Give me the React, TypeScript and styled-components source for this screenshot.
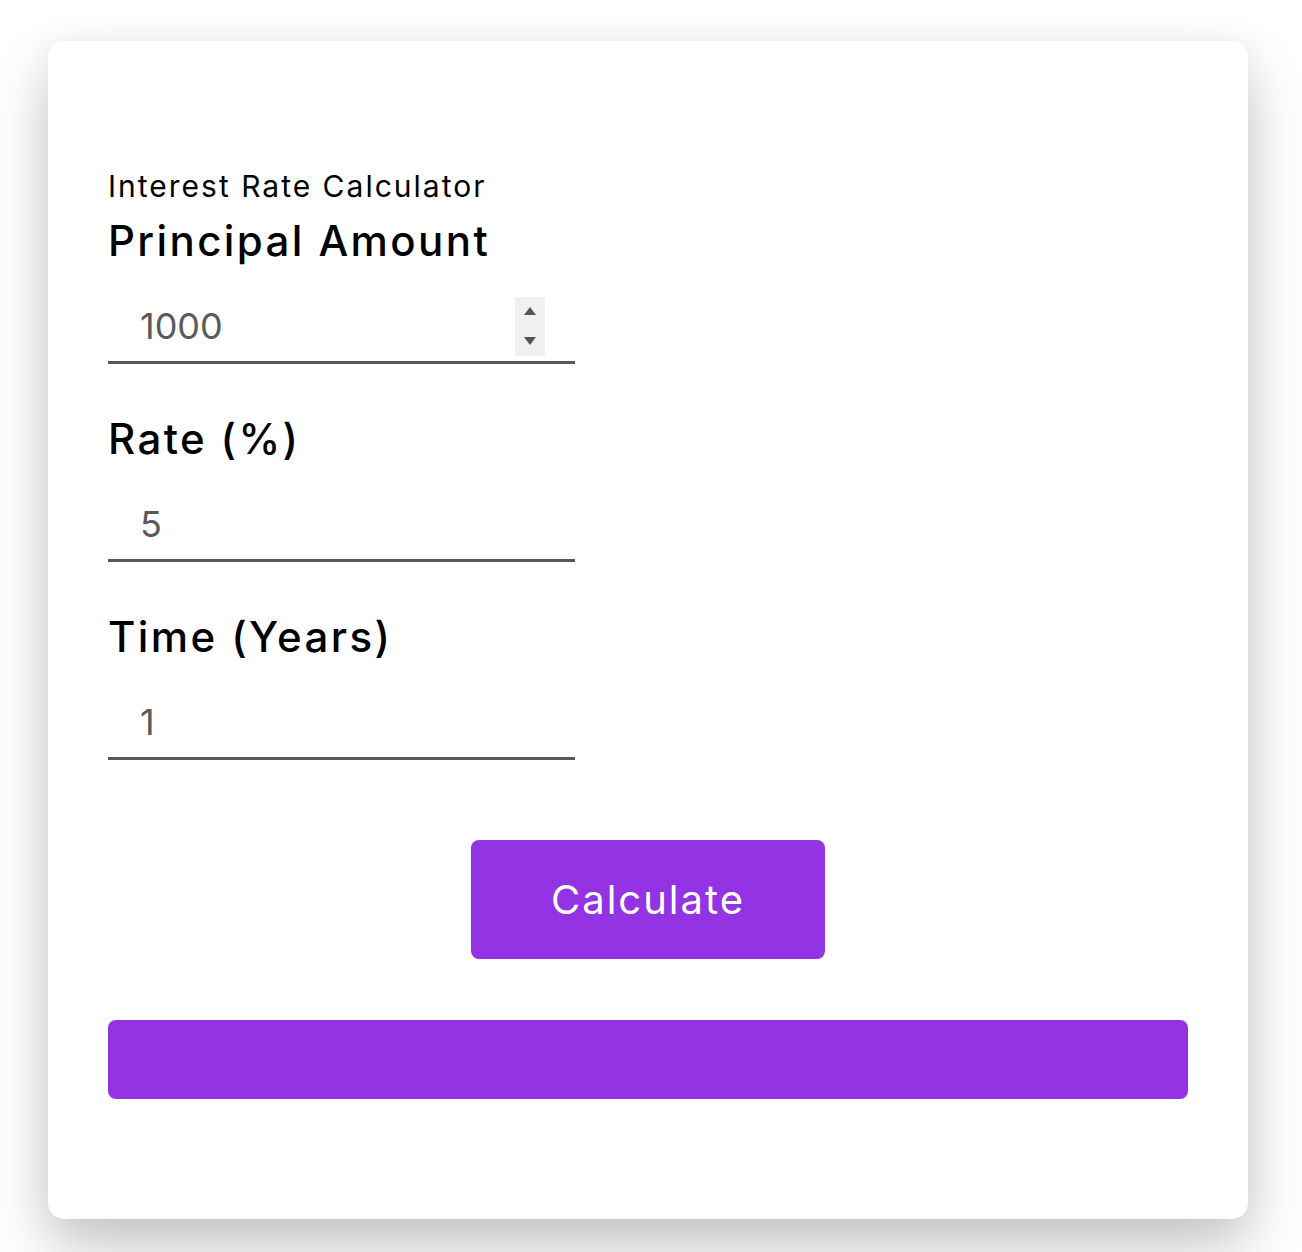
import styled, { createGlobalStyle } from 'styled-components';

const GlobalStyle = createGlobalStyle`
  body {
    margin: 0;
    background: #ffffff;
    font-family: Inter, 'Noto Sans', sans-serif;
  }
`;

const Page = styled.main`
  padding: 41px 54px 33px 48px;
`;

const Card = styled.section`
  width: 1200px;
  box-sizing: border-box;
  padding: 60px 60px 120px;
  background: #ffffff;
  border-radius: 16px;
  box-shadow: 0 30px 60px rgba(0, 0, 0, 0.22), 0 0 36px rgba(0, 0, 0, 0.05);
`;

const Title = styled.h2`
  margin: 0 0 7px;
  padding-top: 65px;
  font-size: 30px;
  font-weight: 400;
  line-height: 40px;
  letter-spacing: 2px;
  color: #000;
`;

const Field = styled.div`
  display: flex;
  flex-direction: column;
  width: 467px;
  margin-bottom: 47px;
`;

const Label = styled.label`
  font-size: 42px;
  font-weight: 500;
  line-height: 56px;
  letter-spacing: 2.4px;
  color: #000;
`;

const InputRow = styled.div`
  display: flex;
  align-items: center;
  height: 70px;
  padding-top: 22px;
  border-bottom: 3px solid #585858;
`;

const Input = styled.input`
  flex: 1;
  min-width: 0;
  border: none;
  outline: none;
  background: transparent;
  padding: 0 0 0 32px;
  font-family: inherit;
  font-size: 36px;
  color: #5a5a5a;
`;

const Stepper = styled.span`
  display: flex;
  flex-direction: column;
  align-items: center;
  justify-content: center;
  gap: 22px;
  width: 30px;
  height: 59px;
  margin-right: 30px;
  background: #f0f0f0;
`;

const Arrow = styled.span<{ $down?: boolean }>`
  width: 0;
  height: 0;
  border-left: 6px solid transparent;
  border-right: 6px solid transparent;
  ${({ $down }) =>
    $down ? 'border-top: 8px solid #555;' : 'border-bottom: 8px solid #555;'}
`;

const Actions = styled.div`
  display: flex;
  justify-content: center;
  margin-top: 80px;
`;

const CalcButton = styled.button`
  width: 354px;
  height: 119px;
  border: none;
  border-radius: 8px;
  background: #9333e3;
  color: #ffffff;
  font-family: inherit;
  font-size: 40px;
  font-weight: 400;
  letter-spacing: 2px;
  cursor: pointer;
`;

const Result = styled.div`
  height: 79px;
  margin-top: 61px;
  border-radius: 8px;
  background: #9333e3;
  color: #ffffff;
`;

interface FieldProps {
  label: string;
  value: string;
  stepper?: boolean;
}

const NumberField = ({ label, value, stepper }: FieldProps) => (
  <Field>
    <Label>{label}</Label>
    <InputRow>
      <Input type="text" defaultValue={value} />
      {stepper && (
        <Stepper>
          <Arrow />
          <Arrow $down />
        </Stepper>
      )}
    </InputRow>
  </Field>
);

const App = () => {
  return (
    <>
      <GlobalStyle />
      <Page>
        <Card>
          <Title>Interest Rate Calculator</Title>
          <NumberField label="Principal Amount" value="1000" stepper />
          <NumberField label="Rate (%)" value="5" />
          <NumberField label="Time (Years)" value="1" />
          <Actions>
            <CalcButton>Calculate</CalcButton>
          </Actions>
          <Result />
        </Card>
      </Page>
    </>
  );
};

export default App;
